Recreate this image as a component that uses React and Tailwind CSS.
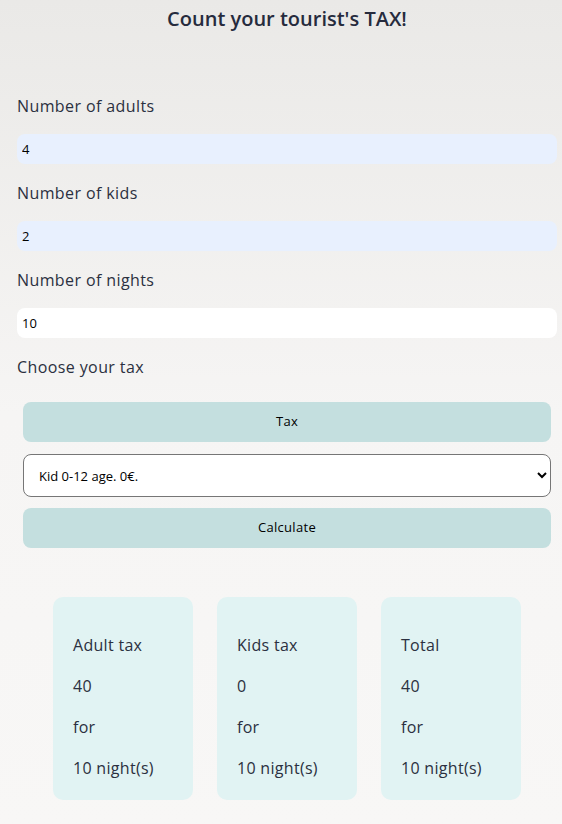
import React from 'react';

const fields = [
  { label: 'Number of adults', value: '4', autofill: true },
  { label: 'Number of kids', value: '2', autofill: true },
  { label: 'Number of nights', value: '10', autofill: false },
];

const results = [
  { title: 'Adult tax', amount: 40 },
  { title: 'Kids tax', amount: 0 },
  { title: 'Total', amount: 40 },
];

const App = () => {
  return (
    <div
      className="min-h-[824px] w-full bg-gradient-to-b from-[#eae9e7] via-[#f6f5f4] to-[#f8f7f6] px-[17px] pb-6 text-[#2b3040]"
      style={{ fontFamily: '"Open Sans", "Noto Sans", sans-serif' }}
    >
      {/* content overflows the padding box by 12px, like content-box inputs at width:100% */}
      <div className="-mr-[12px]">
        <h1 className="pt-[5px] text-center text-[20px] font-semibold leading-[28px] text-[#262b3d]">
          Count your tourist's TAX!
        </h1>

        <form className="mt-[61px] flex flex-col" onSubmit={(e) => e.preventDefault()}>
          {fields.map((f) => (
            <label key={f.label} className="flex flex-col">
              <span className="text-[16px] leading-[24px] tracking-[0.4px]">{f.label}</span>
              <input
                type="number"
                defaultValue={f.value}
                className={`mt-[16px] mb-[17px] h-[30px] w-full rounded-lg px-[5px] text-[13px] text-black outline-none ${
                  f.autofill ? 'bg-[#e8f0fe]' : 'bg-white'
                }`}
              />
            </label>
          ))}

          <span className="text-[16px] leading-[24px] tracking-[0.4px]">Choose your tax</span>

          <div className="mx-[6px] mt-[23px] flex flex-col">
            <button type="button" className="h-[40px] w-full rounded-lg bg-[#c4dfdf] text-[13px] tracking-[0.3px] text-black">
              Tax
            </button>
            <select
              defaultValue="kid"
              className="mt-[12px] h-[43px] w-full rounded-lg border border-[#767676] bg-white pl-[11px] pr-1 text-[13px] text-black"
            >
              <option value="adult">Adult 13+ age. 1€.</option>
              <option value="kid">Kid 0-12 age. 0€.</option>
            </select>
            <button type="submit" className="mt-[11px] h-[40px] w-full rounded-lg bg-[#c4dfdf] text-[13px] tracking-[0.3px] text-black">
              Calculate
            </button>

            <div className="mt-[49px] flex justify-center gap-6">
              {results.map((r) => (
                <div
                  key={r.title}
                  className="flex h-[203px] w-[140px] flex-col gap-[17px] rounded-[10px] bg-[#e1f3f3] px-5 pt-[36px] text-[16px] leading-[24px] tracking-[0.3px]"
                >
                  <p>{r.title}</p>
                  <p>{r.amount}</p>
                  <p>for</p>
                  <p>10 night(s)</p>
                </div>
              ))}
            </div>
          </div>
        </form>
      </div>
    </div>
  );
};

export default App;
